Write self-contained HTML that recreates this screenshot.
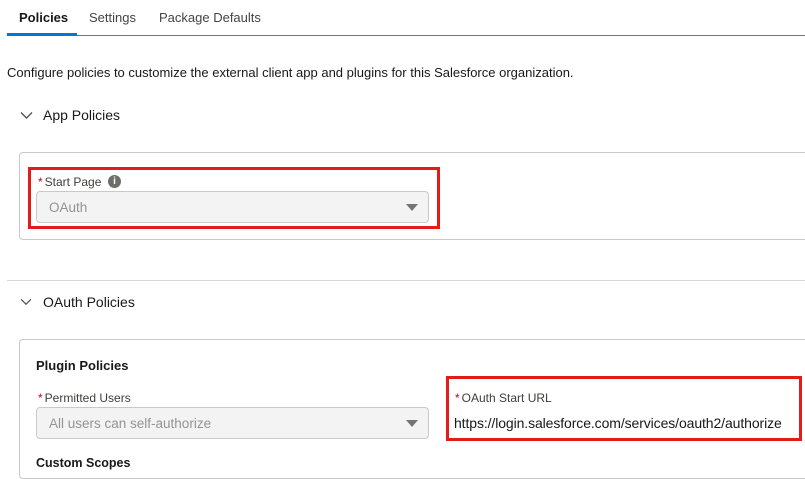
<!DOCTYPE html>
<html><head><style>
*{box-sizing:border-box;margin:0;padding:0}
body{width:805px;height:470px;overflow:hidden;background:#fff;font-family:"Liberation Sans",sans-serif;color:#181818;position:relative;font-size:13px}
.a{position:absolute;white-space:nowrap}
.req{color:#ba0517;margin-right:2px}
.sel{position:absolute;background:#f3f3f3;border:1px solid #c9c9c9;border-radius:4px;color:#939393;font-size:13.5px;padding-left:12px;display:flex;align-items:center}
.tri{position:absolute;right:10px;top:50%;margin-top:-3px;width:0;height:0;border-left:6px solid transparent;border-right:6px solid transparent;border-top:7px solid #747474}
.red{position:absolute;border:3px solid #e41b1b}
</style></head><body>
<div class="a" style="left:19px;top:10px;font-weight:bold;font-size:13px">Policies</div>
<div class="a" style="left:89px;top:10px;color:#444">Settings</div>
<div class="a" style="left:159px;top:10px;color:#444">Package Defaults</div>
<div class="a" style="left:7px;top:35px;width:798px;height:1px;background:#747474"></div>
<div class="a" style="left:7px;top:33px;width:70px;height:3px;background:#0176d3"></div>
<div class="a" style="left:7px;top:65px;font-size:13px">Configure policies to customize the external client app and plugins for this Salesforce organization.</div>
<svg class="a" style="left:20px;top:111px" width="13" height="9" viewBox="0 0 13 9"><path d="M1 1.5L6.5 7L12 1.5" stroke="#555" stroke-width="1.4" fill="none"/></svg>
<div class="a" style="left:43px;top:107px;font-size:14px">App Policies</div>
<div class="a" style="left:19px;top:152px;width:800px;height:88px;border:1px solid #c9c9c9;border-radius:4px"></div>
<div class="a" style="left:38px;top:175px;font-size:12px;color:#3e3e3c"><span class="req">*</span>Start Page</div>
<div class="a" style="left:108px;top:175px;width:13px;height:13px;border-radius:50%;background:#706e6b;color:#fff;font-size:10px;font-weight:bold;text-align:center;line-height:13px">i</div>
<div class="sel" style="left:36px;top:191px;width:393px;height:32px">OAuth<div class="tri"></div></div>
<div class="red" style="left:28px;top:167px;width:412px;height:62px"></div>
<div class="a" style="left:7px;top:280px;width:798px;height:1px;background:#d8d8d8"></div>
<svg class="a" style="left:20px;top:298px" width="12" height="8" viewBox="0 0 13 9"><path d="M1 1.5L6.5 7L12 1.5" stroke="#555" stroke-width="1.4" fill="none"/></svg>
<div class="a" style="left:43px;top:294px;font-size:14px">OAuth Policies</div>
<div class="a" style="left:19px;top:339px;width:800px;height:140px;border:1px solid #c9c9c9;border-radius:4px"></div>
<div class="a" style="left:36px;top:358px;font-weight:bold;font-size:13px">Plugin Policies</div>
<div class="a" style="left:38px;top:391px;font-size:12px;color:#3e3e3c"><span class="req">*</span>Permitted Users</div>
<div class="sel" style="left:36px;top:407px;width:393px;height:32px">All users can self-authorize<div class="tri"></div></div>
<div class="a" style="left:455px;top:391px;font-size:12px;color:#3e3e3c"><span class="req">*</span>OAuth Start URL</div>
<div class="a" style="left:454px;top:415px;font-size:14px;letter-spacing:-0.1px">https://login.salesforce.com/services/oauth2/authorize</div>
<div class="red" style="left:446px;top:376px;width:356px;height:65px"></div>
<div class="a" style="left:36px;top:456px;font-weight:bold;font-size:12.5px">Custom Scopes</div>
</body></html>
